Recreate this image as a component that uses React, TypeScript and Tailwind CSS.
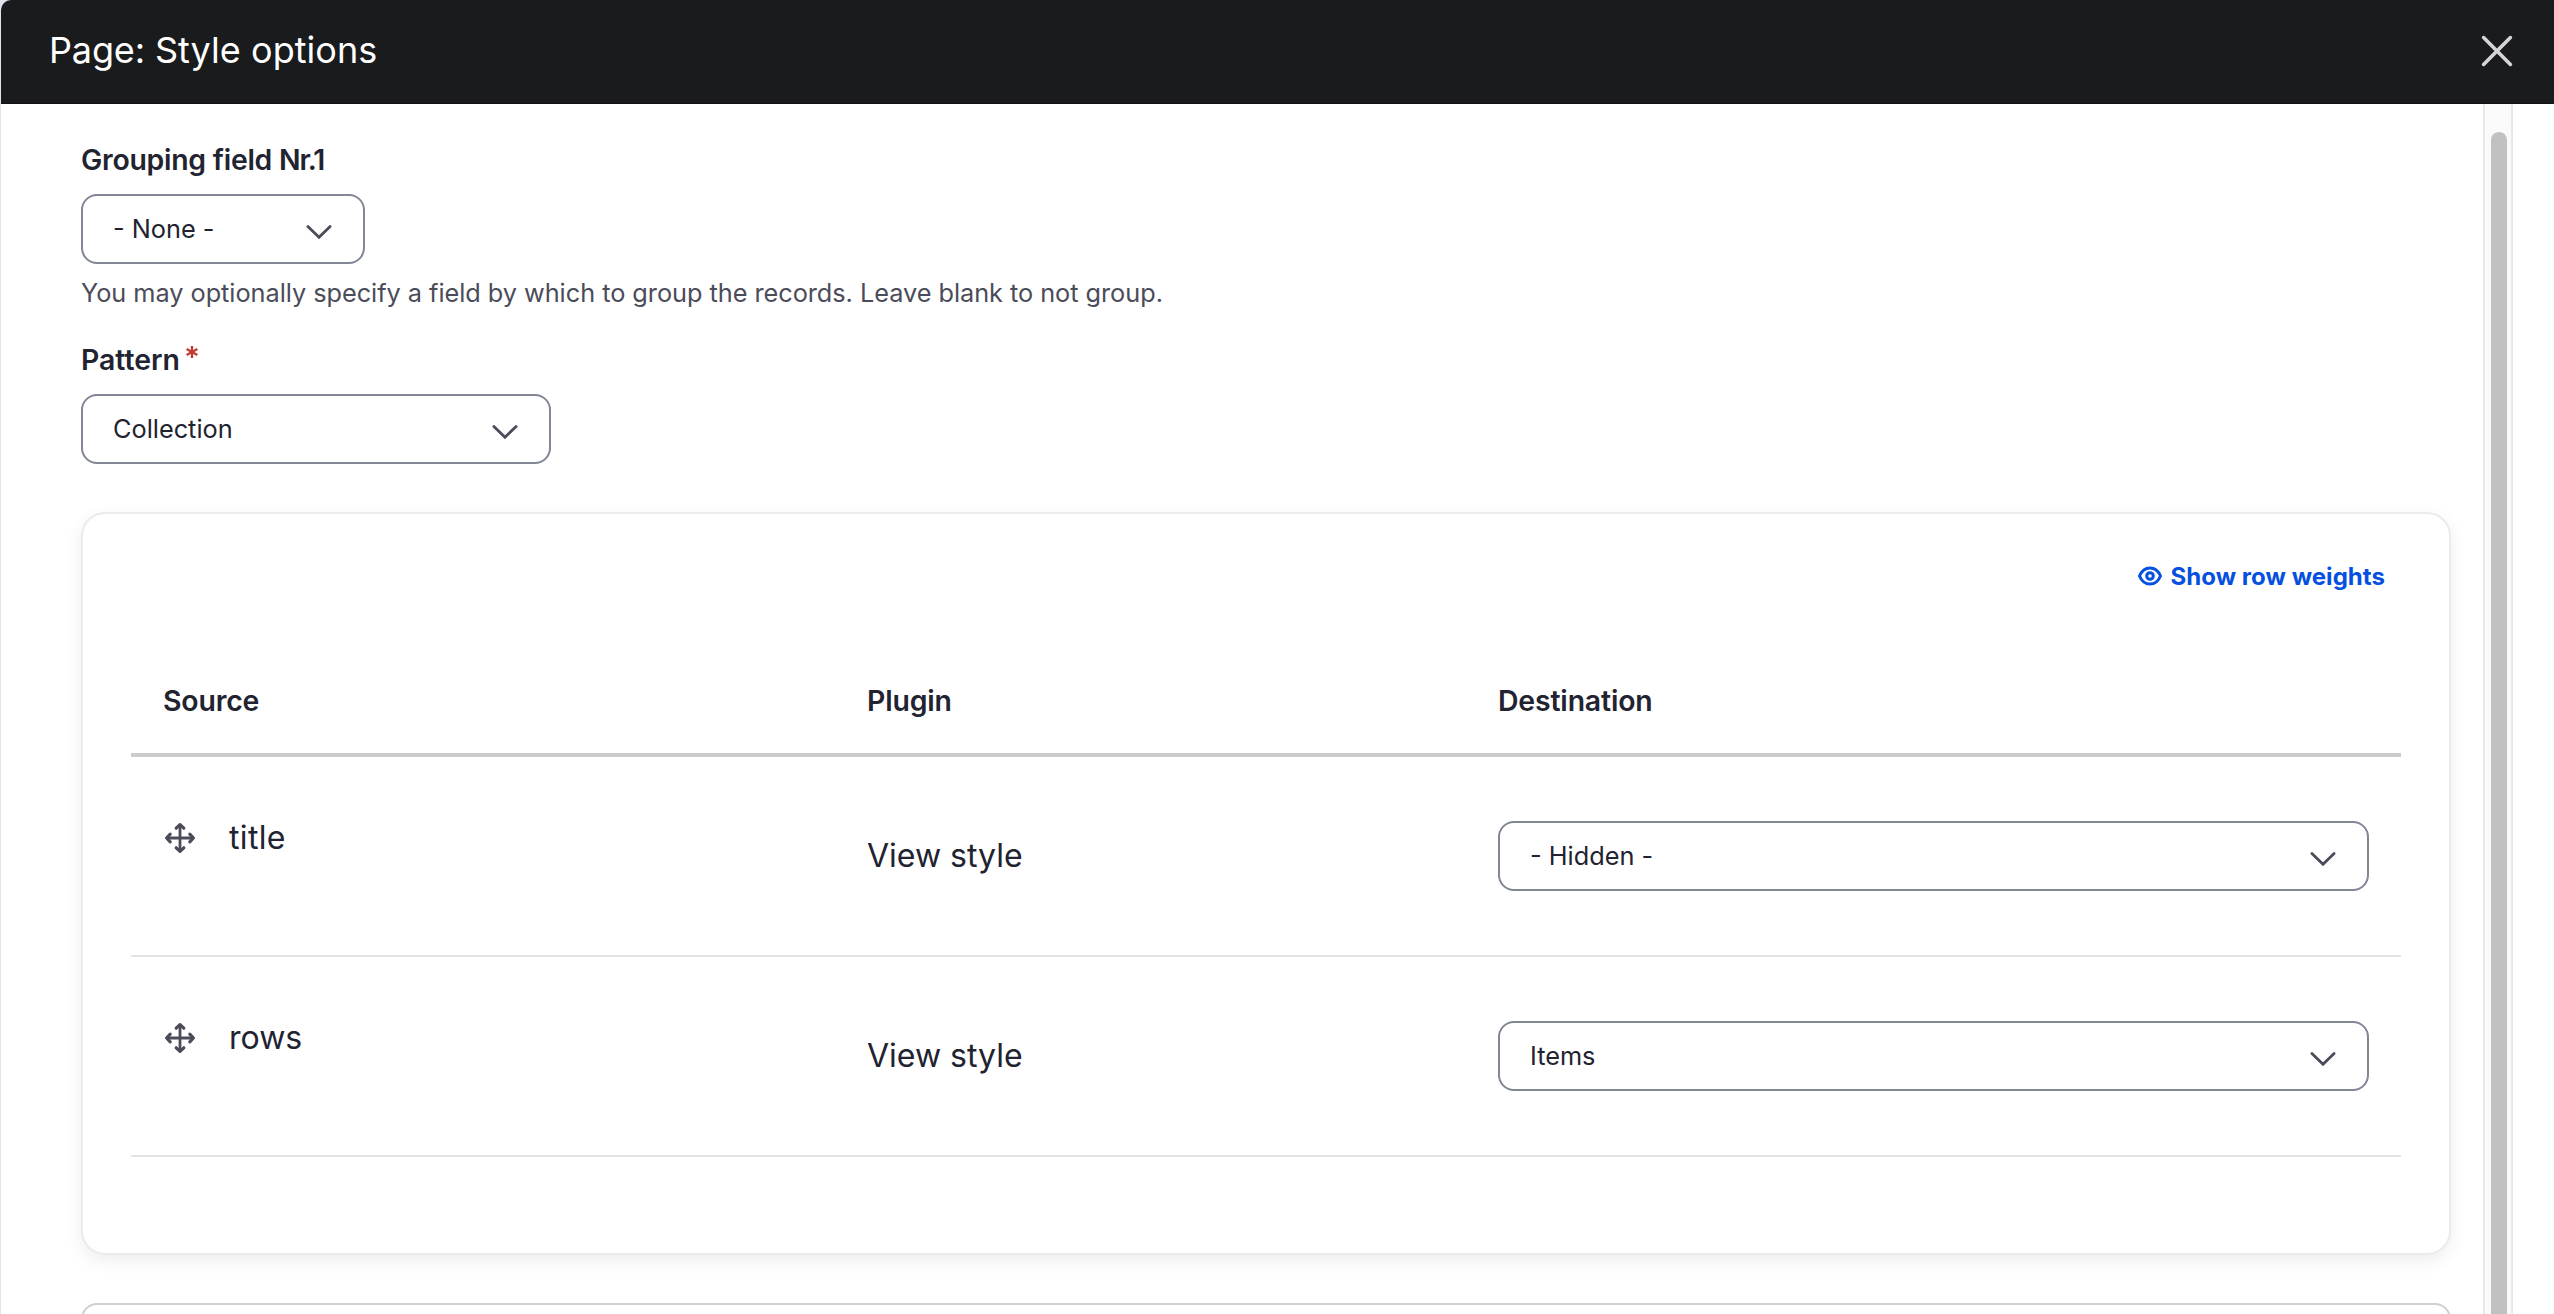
import React from "react";

function Select({ value, className }: { value: string; className: string }) {
  return (
    <button
      type="button"
      className={`flex h-[70px] shrink-0 items-center justify-between rounded-2xl border-2 border-[#828796] bg-white pl-[30px] pr-[30px] text-[25.3px] leading-8 text-[#222330] ${className}`}
    >
      <span className="whitespace-pre">{value}</span>
      <svg className="mt-[5px] h-4 w-7 shrink-0" viewBox="0 0 28 16" fill="none" stroke="#4b4c59" strokeWidth="2.8" strokeLinecap="round">
        <path d="M2.9 2.4 14 13.2 25.1 2.4" />
      </svg>
    </button>
  );
}

function MoveIcon() {
  return (
    <svg className="size-8 shrink-0" viewBox="0 0 32 32" fill="none" stroke="#4b4c59" strokeWidth="3.2" strokeLinecap="round" strokeLinejoin="round">
      <path d="M16 3v26M3 16h26" strokeWidth="2.8" />
      <path d="M12.200 6.200 16 2.600l3.800 3.600M12.200 25.800l3.800 3.600 3.800-3.600M6.200 12.200 2.600 16l3.600 3.800M25.800 12.200l3.600 3.800-3.600 3.800" />
    </svg>
  );
}

function EyeIcon() {
  return (
    <svg className="mb-[3px] h-5 w-6 shrink-0" viewBox="0 0 24 20" fill="none" stroke="#0550e0" strokeWidth="3">
      <path d="M1.500 10C3.500 5.200 7.500 1.900 12 1.900S20.500 5.200 22.500 10C20.500 14.800 16.500 18.100 12 18.100S3.500 14.800 1.500 10Z" strokeLinejoin="round" />
      <circle cx="12" cy="10" r="3.300" />
    </svg>
  );
}

const rows = [
  { source: "title", plugin: "View style", destination: "- Hidden -", tracking: "tracking-[0.35px]" },
  { source: "rows", plugin: "View style", destination: "Items", tracking: "tracking-normal" },
];

const columns = "grid grid-cols-[704px_631px_935px]";

export default function App() {
  return (
    <div className="flex h-[1314px] w-[2554px] flex-col overflow-hidden bg-[#e1e4ee] pl-px font-['Inter',sans-serif] text-[#222330]">
      <header className="flex h-[104px] shrink-0 items-center justify-between rounded-tl-[10px] border-b border-[#151014] bg-[#1a1b1c] pb-[2px] pl-12 pr-[41px]">
        <h1 className="mb-[2px] text-[36px] leading-[44px] text-white">
          <span className="tracking-[-0.15px]">Page: </span>
          <span className="tracking-[0.05px]">Style options</span>
        </h1>
        <button type="button" aria-label="Close">
          <svg className="size-8" viewBox="0 0 32 32" fill="none" stroke="#d6d4d6" strokeWidth="3.6" strokeLinecap="round">
            <path d="M2.600 2.600 29.400 29.400M29.400 2.600 2.600 29.400" />
          </svg>
        </button>
      </header>

      <div className="flex min-h-0 flex-1 bg-white">
        <main className="flex w-[2482px] shrink-0 flex-col overflow-hidden pl-20 pr-8 pt-9">
          <label className="text-[28.4px] font-semibold leading-10 tracking-[-0.25px]">
            Grouping field <span className="tracking-[-1.1px]">Nr.1</span>
          </label>
          <Select value="- None -" className="mt-[14px] w-[284px]" />
          <p className="mt-[13px] text-[25.3px] leading-8 tracking-[-0.035px] text-[#4b4c59]">
            You may optionally specify a field by which to group the records. Leave blank to not group.
          </p>

          <div className="mt-[31px] flex gap-[6px]">
            <label className="text-[28.4px] font-semibold leading-10">Pattern</label>
            <svg className="mt-[6px] size-3" viewBox="0 0 12 12" stroke="#c0392f" strokeWidth="2.300">
              <path d="M6 0v12M.6 3l10.800 6M11.400 3 .6 9" />
            </svg>
          </div>
          <Select value="Collection" className="mt-[14px] w-[470px]" />

          <section className="mt-12 h-[743px] w-[2370px] shrink-0 rounded-3xl border-2 border-[#ebebeb] bg-white px-12 shadow-[0_6px_18px_rgba(0,20,10,0.07)]">
            <div className="flex justify-end pr-[16px] pt-[47px]">
              <button type="button" className="flex items-center gap-[9px] text-[24px] font-bold leading-8 tracking-[0.04px] text-[#0550e0]">
                <EyeIcon />
                <span>Show row weights</span>
              </button>
            </div>

            <div className="mt-12">
              <div className={`${columns} h-[116px] items-center border-b-4 border-[#cbcbcb] pt-2 text-[28.4px] font-semibold tracking-[-0.14px]`}>
                <div className="pl-8">Source</div>
                <div className="pl-8">Plugin</div>
                <div className="pl-8">Destination</div>
              </div>
              {rows.map((row) => (
                <div key={row.source} className={`${columns} h-[200px] items-center border-b-2 border-[#e4e4e4] text-[32px] leading-[48px]`}>
                  <div className="flex items-center gap-[33px] pb-9 pl-[33px]">
                    <MoveIcon />
                    <span className={row.tracking}>{row.source}</span>
                  </div>
                  <div className="pl-8">{row.plugin}</div>
                  <div className="px-8">
                    <Select value={row.destination} className="w-full" />
                  </div>
                </div>
              ))}
            </div>
          </section>

          <section className="mt-12 h-40 w-[2370px] shrink-0 rounded-2xl border-2 border-[#cfcfd5] bg-white" />
        </main>

        <div className="flex w-[30px] shrink-0 justify-center border-x-2 border-[#e8e8e8] bg-[#fafafa] pl-[2px] pt-7">
          <div className="h-[1400px] w-4 rounded-full bg-[#c1c1c1]" />
        </div>
      </div>
    </div>
  );
}
